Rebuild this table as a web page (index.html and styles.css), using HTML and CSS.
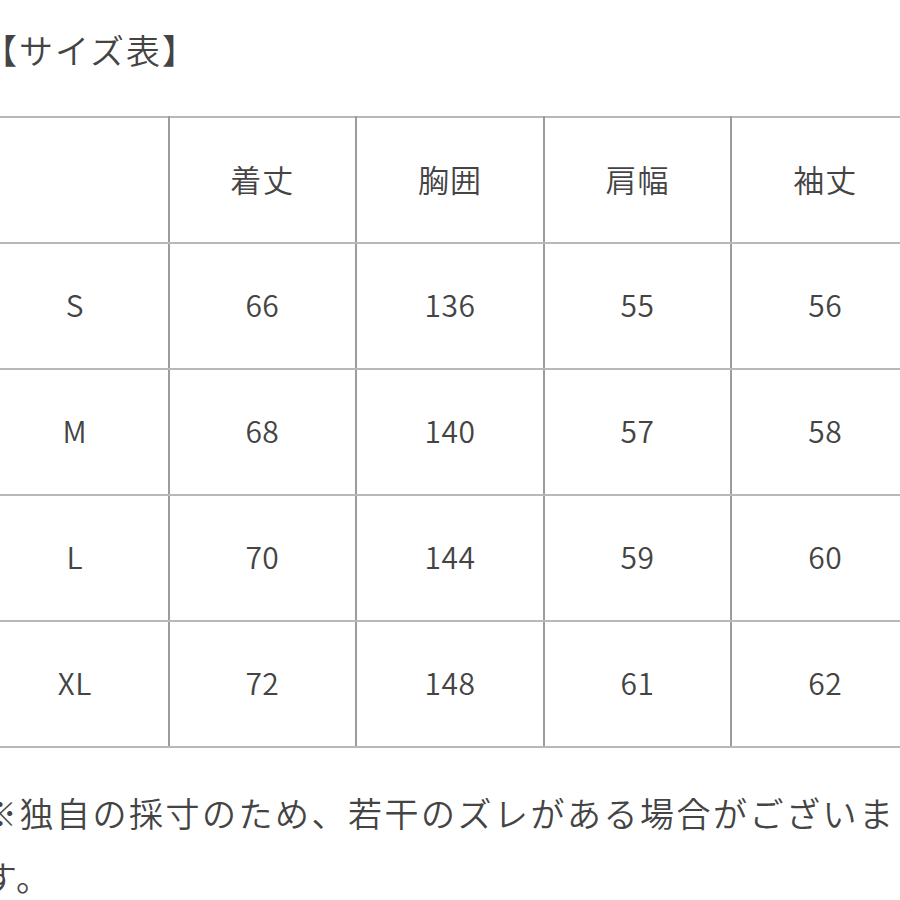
FILE: index.html
```html
<!DOCTYPE html>
<html lang="ja">
<head>
<meta charset="utf-8">
<link rel="stylesheet" href="styles.css">
</head>
<body>
<div class="page">
  <h1 class="title">【サイズ表】</h1>
  <table class="size-table">
    <tr><td></td><td>着丈</td><td>胸囲</td><td>肩幅</td><td>袖丈</td></tr>
    <tr><td>S</td><td>66</td><td>136</td><td>55</td><td>56</td></tr>
    <tr><td>M</td><td>68</td><td>140</td><td>57</td><td>58</td></tr>
    <tr><td>L</td><td>70</td><td>144</td><td>59</td><td>60</td></tr>
    <tr><td>XL</td><td>72</td><td>148</td><td>61</td><td>62</td></tr>
  </table>
  <p class="note">※独自の採寸のため、若干のズレがある場合がございます。</p>
</div>
</body>
</html>
```

FILE: styles.css
```css
html, body {
  margin: 0;
  padding: 0;
  background: #ffffff;
  overflow: hidden;
}
.page {
  margin-left: -20px;
  width: 940px;
  font-family: "Noto Sans CJK JP", "Noto Sans", sans-serif;
  font-weight: 350;
  color: #444444;
}
.title {
  margin: 0;
  padding-top: 30px;
  padding-left: 3px;
  font-size: 34px;
  line-height: 40px;
  font-weight: 350;
  letter-spacing: 2px;
  color: #444444;
  height: 40px;
}
.size-table {
  margin-top: 46px;
  border-collapse: collapse;
  table-layout: fixed;
}
.size-table td {
  width: 186px;
  height: 120px;
  padding: 0 0 4px 0;
  text-align: center;
  vertical-align: middle;
  font-size: 30px;
  letter-spacing: 0.5px;
  border-top: 2px solid #b8b8b8;
  border-bottom: 2px solid #b8b8b8;
  border-left: 2px solid #9c9c9c;
  border-right: 2px solid #9c9c9c;
}
.size-table tr:first-child td {
  font-size: 31px;
  letter-spacing: 1px;
}
.note {
  margin: 33px 0 0 0;
  padding-left: 3px;
  font-size: 34px;
  line-height: 64px;
  letter-spacing: 2.5px;
}
```
